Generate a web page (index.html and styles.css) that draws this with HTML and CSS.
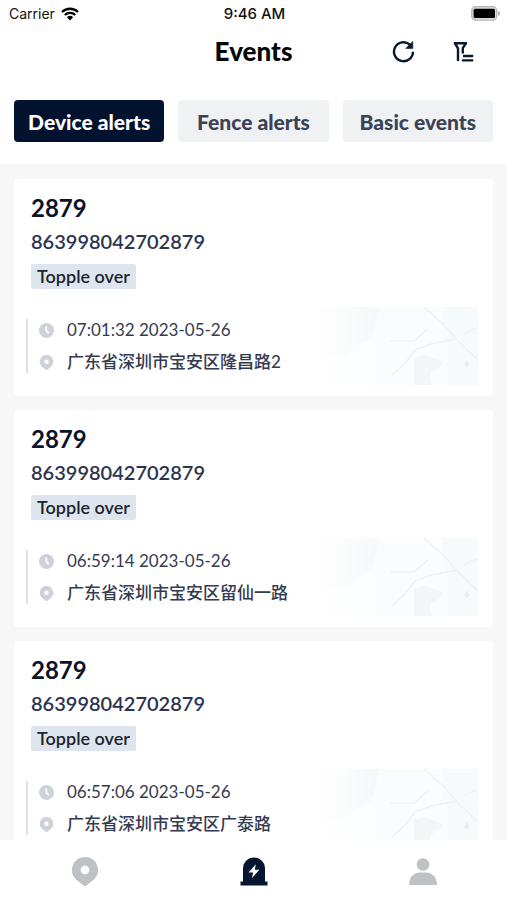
FILE: index.html
```html
<!DOCTYPE html>
<html lang="en">
<head>
<meta charset="utf-8">
<meta name="viewport" content="width=device-width, initial-scale=1">
<title>Events</title>
<link rel="stylesheet" href="styles.css">
</head>
<body>
<svg class="defs" aria-hidden="true">
  <defs>
    <linearGradient id="fade" x1="0" x2="1" y1="0" y2="0">
      <stop offset="0" stop-color="#fff"/>
      <stop offset="0.5" stop-color="#fff" stop-opacity="0"/>
    </linearGradient>
    <symbol id="clock" viewBox="0 0 14 14">
      <circle cx="7" cy="7" r="7" fill="#cfd1da"/>
      <path d="M6.8 3.2V7.2L9.2 9.4" fill="none" stroke="#fff" stroke-width="1.7"/>
    </symbol>
    <symbol id="pin" viewBox="0 0 26 29">
      <path fill="currentColor" fill-rule="evenodd" d="M13 0a13 13 0 0 1 9.2 22.2L14.6 28.4a2.4 2.4 0 0 1-3.2 0L3.8 22.2A13 13 0 0 1 13 0Zm0 8.6a4.4 4.4 0 1 0 0 8.8 4.4 4.4 0 0 0 0-8.8Z"/>
    </symbol>
    <symbol id="map" viewBox="0 0 162 78" preserveAspectRatio="none">
      <rect width="162" height="78" fill="#fafcfd"/>
      <path d="M0 0H64L61 10 59 20 55 32 48 35 44 38 28 50H0Z" fill="#f4f6f7"/>
      <path d="M98 51l10-3 10 3 9 4-4 6-8 4-1 5 2 8H98Z" fill="#f3f5f6"/>
      <path d="M127 0h35v78h-30V40l-5-12Z" fill="#f7fafa"/>
      <path d="M108 0l20 18 16 18 18 17M76 68l14-13 9-12 16-6 26-5M148 27l7-4 7-2M74 34h24l14-12" fill="none" stroke="#eef2f4" stroke-width="1.4"/>
      <path d="M151 53l2 4-2 4-3-4Z" fill="#e8ecee"/>
      <rect width="162" height="78" fill="url(#fade)"/>
    </symbol>
  </defs>
</svg>
<div class="app">
  <header class="top">
    <div class="status">
      <div class="carrier">Carrier
        <svg width="18" height="14" viewBox="0 0 18 14" aria-hidden="true"><path d="M1 5a11.5 11.5 0 0 1 16 0M3.8 8a7.4 7.4 0 0 1 10.4 0" fill="none" stroke="#000" stroke-width="2.3"/><path d="M9 13.6 5.9 10.3a4.5 4.5 0 0 1 6.2 0Z"/></svg>
      </div>
      <div class="time">9:46 AM</div>
      <svg class="battery" width="30" height="15" viewBox="0 0 30 15" aria-hidden="true"><rect x="1.7" y="0.7" width="25" height="13.4" rx="4" fill="#ddd" stroke="#b5b5b5" stroke-width="1.3"/><rect x="3.6" y="2.8" width="21.4" height="9.2" rx="1.5"/><path d="M28 5q2 .6 2 2.4t-2 2.4Z" fill="#aaa"/></svg>
    </div>
    <div class="bar">
      <h1>Events</h1>
      <div class="actions">
        <button type="button" aria-label="Refresh"><svg width="24" height="24" viewBox="0 0 24 24"><path d="M22 12.8A9.5 9.5 0 1 1 18.8 5.6" fill="none" stroke="#07182f" stroke-width="2.4"/><path d="M21.8 2.4V9.4H14.8L18 6.2Z" fill="#07182f" stroke="#07182f" stroke-width=".6"/></svg></button>
        <button type="button" aria-label="Filter"><svg width="24" height="24" viewBox="0 0 24 24"><path d="M2.8 4.2H16M3.8 4.2 7 9.4V22M15 4.2 11.8 9.2V14.6M12 17H22.2M11 21.4H22.2" fill="none" stroke="#07182f" stroke-width="2.4"/></svg></button>
      </div>
    </div>
    <div class="tabs">
      <button type="button" class="tab active">Device alerts</button>
      <button type="button" class="tab">Fence alerts</button>
      <button type="button" class="tab">Basic events</button>
    </div>
  </header>
  <main class="list">
    <article class="card">
      <h2>2879</h2>
      <p class="imei">863998042702879</p>
      <span class="tag">Topple over</span>
      <div class="details">
        <div class="facts">
          <div class="fact"><svg class="ico"><use href="#clock"/></svg><time>07:01:32 2023-05-26</time></div>
          <div class="fact"><svg class="ico"><use href="#pin"/></svg><span class="place">广东省深圳市宝安区隆昌路2</span></div>
        </div>
        <svg class="map" aria-hidden="true"><use href="#map"/></svg>
      </div>
    </article>
    <article class="card">
      <h2>2879</h2>
      <p class="imei">863998042702879</p>
      <span class="tag">Topple over</span>
      <div class="details">
        <div class="facts">
          <div class="fact"><svg class="ico"><use href="#clock"/></svg><time>06:59:14 2023-05-26</time></div>
          <div class="fact"><svg class="ico"><use href="#pin"/></svg><span class="place">广东省深圳市宝安区留仙一路</span></div>
        </div>
        <svg class="map" aria-hidden="true"><use href="#map"/></svg>
      </div>
    </article>
    <article class="card">
      <h2>2879</h2>
      <p class="imei">863998042702879</p>
      <span class="tag">Topple over</span>
      <div class="details">
        <div class="facts">
          <div class="fact"><svg class="ico"><use href="#clock"/></svg><time>06:57:06 2023-05-26</time></div>
          <div class="fact"><svg class="ico"><use href="#pin"/></svg><span class="place">广东省深圳市宝安区广泰路</span></div>
        </div>
        <svg class="map" aria-hidden="true"><use href="#map"/></svg>
      </div>
    </article>
  </main>
  <nav class="dock">
    <a href="#map-view" aria-label="Map"><svg width="26" height="29"><use href="#pin"/></svg></a>
    <a href="#events" aria-label="Events" aria-current="page"><svg width="28" height="29" viewBox="0 0 28 29"><path d="M3 24.5V11.5A11 11 0 0 1 25 11.5V24.5H27.5V28.5H.5V24.5Z" fill="#07162f"/><path d="M15.8 7.2 8.6 15.5h4.6l-1.4 5.8 7.6-8.5h-4.6Z" fill="#fff"/></svg></a>
    <a href="#profile" aria-label="Profile"><svg width="28" height="29" viewBox="0 0 28 29"><circle cx="14" cy="7.5" r="6.3" fill="currentColor"/><path d="M0 28C0 20 5 15.4 11 15.4h6C23 15.4 28 20 28 28Z" fill="currentColor"/></svg></a>
  </nav>
</div>
</body>
</html>
```

FILE: styles.css
```css
* { box-sizing: border-box; }
body {
  margin: 0;
  font-family: Lato, "Noto Sans CJK SC", sans-serif;
  color: #2c3145;
  background: #fff;
}
h1, h2, p { margin: 0; }
button { border: 0; font: inherit; padding: 0; background: none; }
svg { display: block; flex: none; }
.defs { position: absolute; width: 0; height: 0; }
.app { display: flex; flex-direction: column; height: 100vh; }

.top { flex: none; padding-bottom: 22px; }
.status {
  display: grid;
  grid-template-columns: 1fr auto 1fr;
  align-items: center;
  height: 27px;
  padding: 0 7px 0 9px;
  font: 15px/27px Inter, sans-serif;
  color: #111;
}
.carrier { display: flex; align-items: center; gap: 6px; font-size: 14px; }
.time { font-weight: 500; }
.battery { justify-self: end; }

.bar {
  display: grid;
  grid-template-columns: 1fr auto 1fr;
  align-items: center;
  height: 48px;
  padding-right: 32px;
  padding-left: 32px;
  margin-bottom: 25px;
}
.bar h1 { grid-column: 2; font-size: 26px; line-height: 32px; font-weight: 900; color: #050505; }
.actions { display: flex; justify-content: flex-end; gap: 36px; }

.tabs { display: grid; grid-template-columns: repeat(3, 1fr); gap: 14px; padding: 0 14px; }
.tab {
  height: 42px;
  border-radius: 4px;
  background: #eff1f2;
  color: #3a4258;
  font-size: 21px;
  font-weight: 900;
  white-space: nowrap;
}
.tab.active { background: #03132f; color: #fff; }

.list {
  flex: 1;
  min-height: 0;
  overflow: hidden;
  display: flex;
  flex-direction: column;
  gap: 14px;
  padding: 15px 14px 0;
  background: #f7f7f7;
}
.card { flex: none; padding: 14px 15px 11px 17px; border-radius: 4px; background: #fff; }
.card h2 { font-size: 24px; line-height: 30px; font-weight: 700; color: #0b132b; }
.imei { font-size: 20px; line-height: 36px; font-weight: 600; color: #2c3450; }
.tag {
  display: block;
  width: fit-content;
  margin-top: 5px;
  padding: 0 6px;
  border-radius: 2px;
  background: #dfe5ee;
  color: #20242e;
  font-size: 18px;
  line-height: 25px;
  font-weight: 600;
}
.details { display: flex; align-items: center; justify-content: space-between; margin: 18px 0 0 -5px; }
.facts { display: grid; gap: 10px; padding-left: 11px; border-left: 2px solid #dcdfe5; }
.fact {
  display: flex;
  align-items: center;
  gap: 13px;
  font-size: 17px;
  line-height: 22px;
  white-space: nowrap;
  color: #343b52;
}
.place { font-weight: 500; }
.ico { width: 15px; height: 15px; color: #cfd1da; }
.map { width: 162px; height: 78px; }

.dock {
  flex: none;
  display: grid;
  grid-template-columns: repeat(3, 1fr);
  justify-items: center;
  height: 60px;
  padding-top: 17px;
  background: #fff;
}
.dock a { color: #bfc2c4; }
```
